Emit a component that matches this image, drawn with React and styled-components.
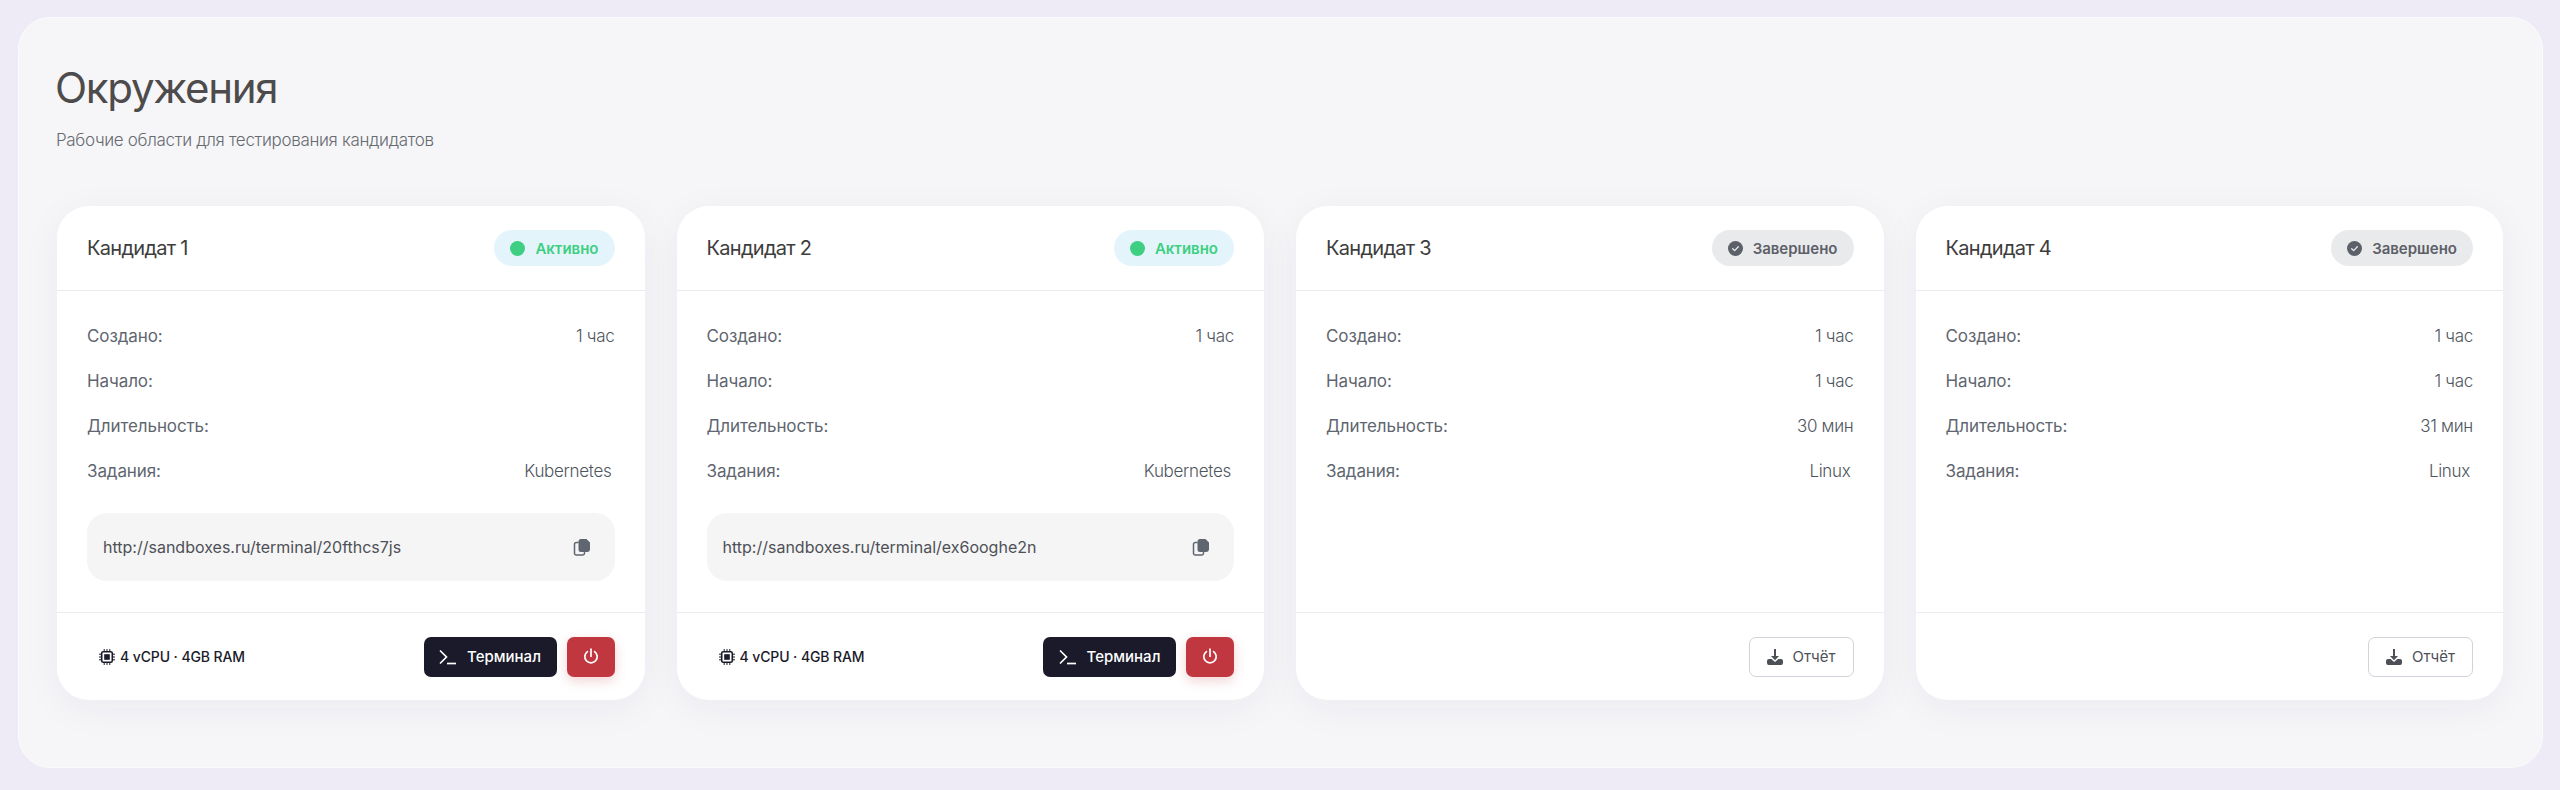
import styled, { createGlobalStyle } from "styled-components";

const GlobalStyle = createGlobalStyle`
  html, body {
    margin: 0;
    padding: 0;
    background: #eeebf6;
    font-family: Inter, "Noto Sans", sans-serif;
  }
  * { box-sizing: border-box; }
`;

const Page = styled.div`
  height: 790px;
  padding: 17px 17px 22px 18px;
  background: #eeebf6;
`;

const Panel = styled.main`
  height: 100%;
  padding: 46px 39px 0 38px;
  background: #f6f6f9;
  border: 1px solid #fbfbfd;
  border-radius: 32px;
`;

const Title = styled.h1`
  margin: 0 0 0 -2px;
  font-size: 42px;
  line-height: 48px;
  font-weight: 400;
  letter-spacing: -1.3px;
  color: #4d4b4b;
`;

const Subtitle = styled.p`
  margin: 16px 0 0 -1px;
  font-size: 17px;
  line-height: 24px;
  font-weight: 300;
  letter-spacing: -0.33px;
  color: #666b70;
`;

const Grid = styled.div`
  display: grid;
  grid-template-columns: repeat(4, 1fr);
  gap: 32px;
  margin-top: 54px;
`;

const Card = styled.article`
  display: flex;
  flex-direction: column;
  height: 494px;
  background: #fff;
  border-radius: 32px;
  box-shadow: 0 8px 40px rgba(30, 30, 50, 0.05);
`;

const CardHeader = styled.header`
  display: flex;
  align-items: center;
  justify-content: space-between;
  height: 85px;
  padding: 0 30px;
  border-bottom: 1px solid #e9ecef;
`;

const CardName = styled.h2`
  margin: 0;
  font-size: 20px;
  line-height: 28px;
  font-weight: 400;
  letter-spacing: -0.7px;
  color: #3d3d3d;
`;

const Badge = styled.span`
  display: inline-flex;
  align-items: center;
  gap: 10px;
  height: 36px;
  padding: 0 16px;
  border-radius: 18px;
  font-size: 15px;
  font-weight: 600;
  background: ${(p) => (p.$active ? "#e3f5fb" : "#e9eaec")};
  color: ${(p) => (p.$active ? "#3ecf82" : "#5c6068")};
`;

const Dot = styled.i`
  width: 15px;
  height: 15px;
  border-radius: 50%;
  background: #3ecf82;
`;

const CardBody = styled.div`
  flex: 1;
  display: flex;
  flex-direction: column;
  padding: 33px 30px 0;
`;

const Rows = styled.dl`
  display: grid;
  grid-template-columns: 1fr auto;
  row-gap: 21px;
  margin: 0;
`;

const Label = styled.dt`
  font-size: 17px;
  line-height: 24px;
  font-weight: 400;
  letter-spacing: -0.1px;
  color: #5f6670;
`;

const Value = styled.dd`
  margin: 0;
  min-height: 24px;
  padding-right: ${(p) => (p.$tag ? "3px" : "0")};
  font-size: 17px;
  line-height: 24px;
  font-weight: 300;
  letter-spacing: -0.3px;
  text-align: right;
  color: #50565e;
`;

const UrlBox = styled.div`
  display: flex;
  align-items: center;
  justify-content: space-between;
  height: 68px;
  margin-top: 30px;
  padding: 0 24px 0 16px;
  background: #f5f5f5;
  border-radius: 20px;
  font-size: 16px;
  color: #4d5057;
`;

const CardFooter = styled.footer`
  display: flex;
  align-items: center;
  justify-content: ${(p) => (p.$end ? "flex-end" : "space-between")};
  gap: 10px;
  height: 88px;
  padding: 0 30px 0 42px;
  border-top: 1px solid #e9ecef;
`;

const Specs = styled.span`
  display: inline-flex;
  align-items: center;
  gap: 5px;
  margin-right: auto;
  font-size: 14px;
  font-weight: 500;
  letter-spacing: -0.1px;
  color: #1a1a2a;
`;

const Button = styled.button`
  display: inline-flex;
  align-items: center;
  justify-content: center;
  height: 40px;
  border-radius: 7px;
  font-family: inherit;
  font-size: 15px;
`;

const TerminalButton = styled(Button)`
  width: 133px;
  gap: 10px;
  border: 0;
  font-weight: 500;
  background: #1a1a2a;
  color: #fff;
`;

const PowerButton = styled(Button)`
  width: 48px;
  border: 0;
  background: #c13740;
  color: #fff;
  box-shadow: 0 4px 12px rgba(193, 55, 64, 0.22);
`;

const ReportButton = styled(Button)`
  width: 105px;
  gap: 10px;
  border: 1px solid #ced4da;
  font-weight: 400;
  background: #fff;
  color: #4d5057;
`;

const CheckIcon = () => (
  <svg width="15" height="15" viewBox="0 0 16 16">
    <circle cx="8" cy="8" r="8" fill="#5c6068" />
    <path d="M5 8.2l2.1 2.1L11 6.2" fill="none" stroke="#e9eaec" strokeWidth="1.4" strokeLinecap="round" strokeLinejoin="round" />
  </svg>
);

const CopyIcon = () => (
  <svg width="18" height="20" viewBox="0 0 18 20">
    <path d="M5 5.5H3.2A1.7 1.7 0 0 0 1.5 7.2v9.1A1.7 1.7 0 0 0 3.2 18h6.6a1.7 1.7 0 0 0 1.7-1.7v-.8" fill="none" stroke="#5f6670" strokeWidth="1.5" strokeLinecap="round" />
    <path d="M8 2h5.5L17 5.5V12a3 3 0 0 1-3 3H8a2.5 2.5 0 0 1-2.5-2.5v-8A2.5 2.5 0 0 1 8 2z" fill="#5f6670" />
  </svg>
);

const CpuIcon = () => (
  <svg width="16" height="16" viewBox="0 0 16 16" fill="none" stroke="#1a1a2a">
    <rect x="2.7" y="2.7" width="10.6" height="10.6" rx="1.6" strokeWidth="1.6" />
    <rect x="5.2" y="5.2" width="5.6" height="5.6" fill="#1a1a2a" stroke="none" />
    <path d="M5.2 0v2.5M8 0v2.5M10.8 0v2.5M5.2 13.5V16M8 13.5V16M10.8 13.5V16M0 5.2h2.5M0 8h2.5M0 10.8h2.5M13.5 5.2H16M13.5 8H16M13.5 10.8H16" strokeWidth="1" />
  </svg>
);

const TerminalIcon = () => (
  <svg width="18" height="16" viewBox="0 0 18 16" fill="none" stroke="#fff" strokeWidth="1.7">
    <path d="M1 1.5L7.5 8 1 14.5" />
    <path d="M8 14.5h9" />
  </svg>
);

const PowerIcon = () => (
  <svg width="16" height="17" viewBox="0 0 16 17" fill="none" stroke="#fff" strokeWidth="1.7" strokeLinecap="round">
    <path d="M8 1.2v7" />
    <path d="M4.4 3.6a6.2 6.2 0 1 0 7.2 0" />
  </svg>
);

const DownloadIcon = () => (
  <svg width="16" height="16" viewBox="0 0 16 16" fill="#4d5057">
    <path d="M7 0h2v7h3l-4 4.2L4 7h3z" />
    <path d="M2 10h2.6L8 13l3.4-3H14a2 2 0 0 1 2 2v2a2 2 0 0 1-2 2H2a2 2 0 0 1-2-2v-2a2 2 0 0 1 2-2z" />
  </svg>
);

const candidates = [
  { name: "Кандидат 1", active: true, created: "1 час", task: "Kubernetes", url: "http://sandboxes.ru/terminal/20fthcs7js" },
  { name: "Кандидат 2", active: true, created: "1 час", task: "Kubernetes", url: "http://sandboxes.ru/terminal/ex6ooghe2n" },
  { name: "Кандидат 3", created: "1 час", started: "1 час", duration: "30 мин", task: "Linux" },
  { name: "Кандидат 4", created: "1 час", started: "1 час", duration: "31 мин", task: "Linux" },
];

const EnvCard = ({ env }) => (
  <Card>
    <CardHeader>
      <CardName>{env.name}</CardName>
      <Badge $active={env.active}>
        {env.active ? <Dot /> : <CheckIcon />}
        {env.active ? "Активно" : "Завершено"}
      </Badge>
    </CardHeader>
    <CardBody>
      <Rows>
        <Label>Создано:</Label>
        <Value>{env.created}</Value>
        <Label>Начало:</Label>
        <Value>{env.started}</Value>
        <Label>Длительность:</Label>
        <Value>{env.duration}</Value>
        <Label>Задания:</Label>
        <Value $tag>{env.task}</Value>
      </Rows>
      {env.url && (
        <UrlBox>
          {env.url}
          <CopyIcon />
        </UrlBox>
      )}
    </CardBody>
    {env.active ? (
      <CardFooter>
        <Specs>
          <CpuIcon />
          4 vCPU · 4GB RAM
        </Specs>
        <TerminalButton>
          <TerminalIcon />
          Терминал
        </TerminalButton>
        <PowerButton>
          <PowerIcon />
        </PowerButton>
      </CardFooter>
    ) : (
      <CardFooter $end>
        <ReportButton>
          <DownloadIcon />
          Отчёт
        </ReportButton>
      </CardFooter>
    )}
  </Card>
);

export default function App() {
  return (
    <Page>
      <GlobalStyle />
      <Panel>
        <Title>Окружения</Title>
        <Subtitle>Рабочие области для тестирования кандидатов</Subtitle>
        <Grid>
          {candidates.map((env) => (
            <EnvCard key={env.name} env={env} />
          ))}
        </Grid>
      </Panel>
    </Page>
  );
}
